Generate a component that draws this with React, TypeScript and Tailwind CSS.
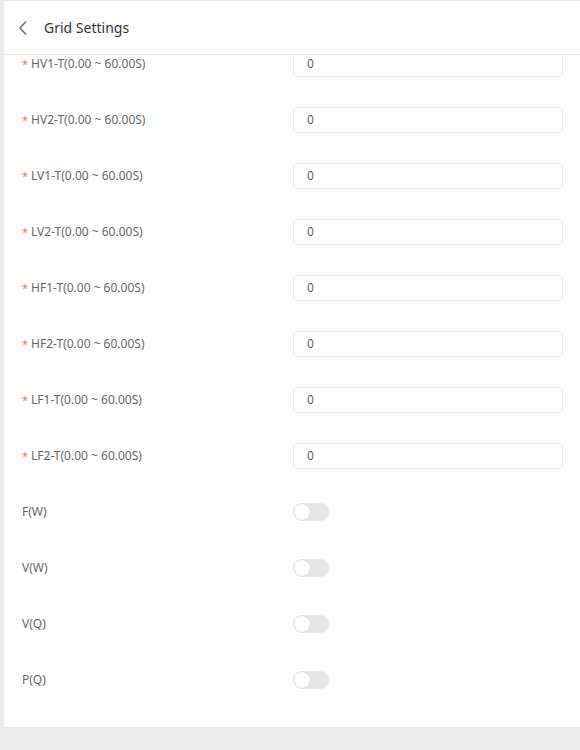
import React from 'react';

const timeFields = ['HV1-T', 'HV2-T', 'LV1-T', 'LV2-T', 'HF1-T', 'HF2-T', 'LF1-T', 'LF2-T'];
const switchFields = ['F(W)', 'V(W)', 'V(Q)', 'P(Q)'];

const Toggle: React.FC = () => (
    <div className="w-[36px] h-[18px] rounded-full bg-[#e6e6e6] flex items-center p-[1px]">
        <div className="w-[16px] h-[16px] rounded-full bg-white shadow-[0_0_1px_rgba(0,0,0,0.25)]" />
    </div>
);

export default function App() {
    return (
        <div className="w-[580px] h-[750px] bg-[#ebebeb] pt-[1px] pl-[4px] font-['Noto_Sans','Liberation_Sans',sans-serif]">
            <div className="h-[726px] bg-white flex flex-col overflow-hidden">
                <div className="h-[54px] shrink-0 flex items-center border-b border-[#ececec]">
                    <svg className="ml-[14px] mr-[16px]" width="10" height="14" viewBox="0 0 10 14" fill="none">
                        <path d="M7.5 1 L2 7 L7.5 13" stroke="#666" strokeWidth="1.4" strokeLinecap="round" strokeLinejoin="round" />
                    </svg>
                    <span className="text-[14px] text-[#333]">Grid Settings</span>
                </div>
                <div className="flex-1 overflow-hidden">
                    <div className="-mt-[19px]">
                        {timeFields.map(f => (
                            <div key={f} className="h-[56px] flex items-center">
                                <div className="w-[289px] pl-[18px] text-[12px] text-[#666] flex items-center">
                                    <span className="text-[#f56c6c] mr-[3px] text-[11px]">*</span>
                                    <span>{f}(0.00 ~ 60.00S)</span>
                                </div>
                                <div className="w-[270px] h-[26px] border border-[#e8e8e8] rounded-[4px] flex items-center pl-[13px] text-[12px] text-[#606266]">
                                    0
                                </div>
                            </div>
                        ))}
                        {switchFields.map(f => (
                            <div key={f} className="h-[56px] flex items-center">
                                <div className="w-[289px] pl-[18px] text-[12px] text-[#666]">{f}</div>
                                <Toggle />
                            </div>
                        ))}
                        <div className="h-[56px] flex items-center pl-[289px]">
                            <Toggle />
                        </div>
                    </div>
                </div>
            </div>
        </div>
    );
}
